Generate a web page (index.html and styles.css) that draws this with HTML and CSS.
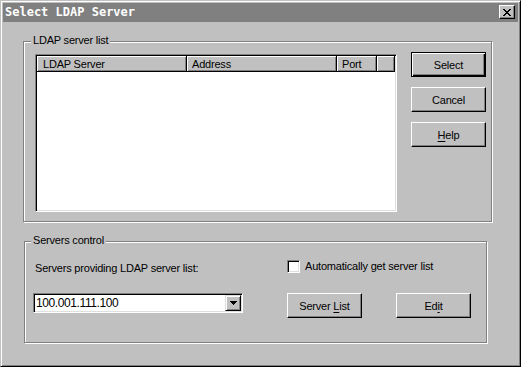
FILE: index.html
```html
<!DOCTYPE html>
<html lang="en">
<head>
  <meta charset="UTF-8" />
  <title>Select LDAP Server</title>
  <link rel="stylesheet" href="styles.css">
</head>
<body>
  <div class="window">
    <div class="titlebar">
      <span class="title">Select LDAP Server</span>
      <button class="close" type="button" aria-label="Close">
        <svg width="8" height="7" viewBox="0 0 8 7" shape-rendering="crispEdges">
          <path fill="#000" d="M0 0h2v1H0zM6 0h2v1H6zM1 1h2v1H1zM5 1h2v1H5zM2 2h4v1H2zM3 3h2v1H3zM2 4h4v1H2zM1 5h2v1H1zM5 5h2v1H5zM0 6h2v1H0zM6 6h2v1H6z"/>
        </svg>
      </button>
    </div>

    <div class="content">
      <div class="group group-list">
        <span class="group-label">LDAP server list</span>
        <div class="listview">
          <div class="list-header">
            <div class="col col-server">LDAP Server</div>
            <div class="col col-address">Address</div>
            <div class="col col-port">Port</div>
            <div class="col col-rest"></div>
          </div>
        </div>
        <div class="actions">
          <button class="btn btn-default" type="button">Select</button>
          <button class="btn" type="button">Cancel</button>
          <button class="btn" type="button"><u>H</u>elp</button>
        </div>
      </div>

      <div class="group group-control">
        <span class="group-label">Servers control</span>
        <div class="control-grid">
          <div class="field-label">Servers providing LDAP server list:</div>
          <label class="check">
            <span class="checkbox"></span>
            <span>Automatically get server list</span>
          </label>
          <div class="combo">
            <span class="combo-value">100.001.111.100</span>
            <span class="combo-btn">
              <svg width="7" height="4" viewBox="0 0 7 4" shape-rendering="crispEdges">
                <path fill="#000" d="M0 0h7v1H0zM1 1h5v1H1zM2 2h3v1H2zM3 3h1v1H3z"/>
              </svg>
            </span>
          </div>
          <div class="control-buttons">
            <button class="btn" type="button">Server <u>L</u>ist</button>
            <button class="btn" type="button">Ed<u>i</u>t</button>
          </div>
        </div>
      </div>
    </div>
  </div>
</body>
</html>
```

FILE: styles.css
```css
* {
  box-sizing: border-box;
}

body {
  margin: 0;
  font-family: "Liberation Sans", Arial, sans-serif;
  font-size: 11px;
  letter-spacing: -0.2px;
  color: #000;
  background: #c0c0c0;
}

.window {
  width: 521px;
  height: 367px;
  padding: 2px;
  background: #c0c0c0;
  border: 1px solid;
  border-color: #c0c0c0 #000 #000 #c0c0c0;
  box-shadow: inset 1px 1px 0 #fff, inset -1px -1px 0 #808080;
}

.titlebar {
  height: 19px;
  background: #808080;
  display: flex;
  justify-content: space-between;
  align-items: flex-start;
  padding: 2px 3px 0 2px;
}

.title {
  font-family: "DejaVu Sans Mono", monospace;
  font-weight: bold;
  font-size: 12px;
  line-height: 15px;
  letter-spacing: 0;
  color: #fff;
}

.close {
  width: 16px;
  height: 14px;
  padding: 0;
  display: flex;
  align-items: center;
  justify-content: center;
  background: #c0c0c0;
  border: 1px solid;
  border-color: #fff #000 #000 #fff;
  box-shadow: inset -1px -1px 0 #808080;
}

.content {
  padding: 19px 0 0 20px;
}

/* etched group boxes */
.group {
  position: relative;
  border: 1px solid #808080;
  box-shadow: 1px 1px 0 #fff, inset 1px 1px 0 #fff;
}

.group-label {
  position: absolute;
  top: -8px;
  left: 7px;
  padding: 0 2px;
  line-height: 13px;
  background: #c0c0c0;
}

.group-list {
  width: 469px;
  height: 181px;
  display: flex;
  padding: 10px 0 0 11px;
}

.listview {
  width: 362px;
  height: 158px;
  margin-top: 2px;
  padding: 1px;
  background: #fff;
  border: 1px solid;
  border-color: #808080 #fff #fff #808080;
  box-shadow: inset 1px 1px 0 #000, inset -1px -1px 0 #dfdfdf;
}

.list-header {
  display: flex;
  height: 16px;
}

.col {
  height: 16px;
  line-height: 16px;
  padding-left: 5px;
  background: #c0c0c0;
  border-right: 1px solid #000;
  border-bottom: 1px solid #000;
  box-shadow: inset 1px 1px 0 #fff, inset -1px -1px 0 #808080;
}

.col-server {
  width: 150px;
  padding-left: 6px;
}

.col-address {
  width: 150px;
}

.col-port {
  width: 40px;
}

.col-rest {
  flex: 1;
}

.actions {
  display: flex;
  flex-direction: column;
  gap: 10px;
  margin-left: 14px;
}

.btn {
  width: 75px;
  height: 25px;
  padding: 0;
  font: inherit;
  letter-spacing: inherit;
  color: #000;
  background: #c0c0c0;
  border: 1px solid;
  border-color: #fff #000 #000 #fff;
  box-shadow: inset -1px -1px 0 #808080;
}

.btn-default {
  border-color: #000;
  box-shadow: inset 1px 1px 0 #fff, inset -1px -1px 0 #000, inset -2px -2px 0 #808080;
}

.btn u {
  text-decoration-thickness: 1px;
  text-underline-offset: 2px;
}

.group-control {
  width: 463px;
  height: 102px;
  margin: 19px 0 0 1px;
  padding: 18px 0 0 8px;
}

.group-control .group-label {
  left: 6px;
}

.control-grid {
  display: grid;
  grid-template-columns: 210px auto;
  grid-template-rows: 13px 25px;
  column-gap: 44px;
  row-gap: 20px;
}

.field-label {
  padding-left: 2px;
  line-height: 13px;
  margin-top: 2px;
}

.check {
  display: flex;
  align-items: center;
  gap: 5px;
  line-height: 13px;
}

.checkbox {
  width: 13px;
  height: 13px;
  background: #fff;
  border: 1px solid;
  border-color: #808080 #fff #fff #808080;
  box-shadow: inset 1px 1px 0 #000, inset -1px -1px 0 #dfdfdf;
}

.combo {
  width: 210px;
  height: 20px;
  display: flex;
  justify-content: space-between;
  padding: 1px;
  background: #fff;
  border: 1px solid;
  border-color: #808080 #fff #fff #808080;
  box-shadow: inset 1px 1px 0 #000, inset -1px -1px 0 #dfdfdf;
}

.combo-value {
  padding-left: 1px;
  line-height: 16px;
  font-size: 12px;
  letter-spacing: -0.4px;
}

.combo-btn {
  width: 16px;
  height: 16px;
  display: flex;
  align-items: center;
  justify-content: center;
  background: #c0c0c0;
  border: 1px solid;
  border-color: #dfdfdf #000 #000 #dfdfdf;
  box-shadow: inset 1px 1px 0 #fff, inset -1px -1px 0 #808080;
}

.control-buttons {
  display: flex;
  gap: 34px;
}
```
